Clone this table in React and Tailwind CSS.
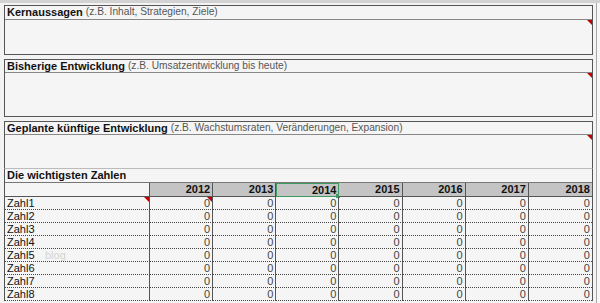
import React from "react";

const years = [2012, 2013, 2014, 2015, 2016, 2017, 2018];
const rows = ["Zahl1", "Zahl2", "Zahl3", "Zahl4", "Zahl5", "Zahl6", "Zahl7", "Zahl8"];

const Flag = () => (
  <span className="absolute right-0 top-0 w-0 h-0 border-l-[5px] border-l-transparent border-t-[5px] border-t-[#c00000]" />
);

const NoteBox = ({ title, hint, titleH, bodyH, last }) => (
  <div className={`shrink-0 border border-[#555] bg-[#f5f5f5] ${last ? "border-b-[#bbb]" : ""}`}>
    <div
      className={`${titleH} flex items-center px-[2px] border-b border-[#888] leading-none whitespace-nowrap`}
    >
      <span className="font-bold text-[11px] text-[#111]">{title}</span>
      <span className="text-[10.2px] text-[#555] ml-[3px]">{hint}</span>
    </div>
    <div className={`relative ${bodyH}`}>
      <Flag />
    </div>
  </div>
);

export default function App() {
  return (
    <div
      className="w-[600px] h-[303px] overflow-hidden bg-[#f3f3f3] flex flex-col"
      style={{ fontFamily: '"Liberation Sans", Arial, sans-serif' }}
    >
      <div className="h-[3px] bg-[#d2d2d2] shrink-0" />
      <div className="flex flex-1 min-h-0">
        <div className="w-[4px] shrink-0" />
        <div className="w-[589px] shrink-0 flex flex-col pt-[2px]">
          <NoteBox title="Kernaussagen" hint="(z.B. Inhalt, Strategien, Ziele)" titleH="h-[14px]" bodyH="h-[34px]" />
          <div className="h-[4px] shrink-0" />
          <NoteBox
            title="Bisherige Entwicklung"
            hint="(z.B. Umsatzentwicklung bis heute)"
            titleH="h-[13px]"
            bodyH="h-[43px]"
          />
          <div className="h-[4px] shrink-0" />
          <NoteBox
            title="Geplante künftige Entwicklung"
            hint="(z.B. Wachstumsraten, Veränderungen, Expansion)"
            titleH="h-[13px]"
            bodyH="h-[33px]"
            last
          />

          {/* Zahlen table */}
          <div className="shrink-0 border-l border-r border-[#555] bg-[#f5f5f5]">
            <div className="h-[14px] flex items-center px-[2px] border-b border-[#777] text-[11px] font-bold text-[#111] leading-none">
              Die wichtigsten Zahlen
            </div>
            <div className="grid grid-cols-[145px_repeat(7,1fr)] text-[11px] leading-none">
              <div className="h-[14px] border-b border-[#555] border-r border-r-[#555]" />
              {years.map((y, i) => (
                <div
                  key={y}
                  className={`relative h-[14px] bg-[#c4c4c4] flex items-center justify-end pr-[2px] font-bold text-[#111] ${
                    y === 2014
                      ? "border border-[#3f9a5f]"
                      : `border-b border-[#555] ${i < 6 ? "border-r border-r-[#555]" : ""}`
                  }`}
                >
                  {y}
                  {y === 2014 && (
                    <span className="absolute -right-[2px] -bottom-[2px] w-[4px] h-[4px] bg-[#3f9a5f]" />
                  )}
                </div>
              ))}
              {rows.map((r, ri) => (
                <React.Fragment key={r}>
                  <div className="relative h-[13px] flex items-center px-[2px] text-[#111] border-b border-b-[#444] [border-bottom-style:dotted] border-r border-r-[#555]">
                    {r}
                    {ri === 0 && <Flag />}
                    {r === "Zahl5" && (
                      <span className="absolute left-[40px] text-[#d4d4d4]">blog</span>
                    )}
                  </div>
                  {years.map((y, i) => (
                    <div
                      key={y}
                      className={`relative h-[13px] flex items-center justify-end pr-[2px] text-[#444] border-b border-b-[#444] [border-bottom-style:dotted] ${
                        i < 6 ? "border-r border-r-[#555]" : ""
                      }`}
                    >
                      0
                      {ri === 0 && i === 0 && <Flag />}
                    </div>
                  ))}
                </React.Fragment>
              ))}
            </div>
          </div>
        </div>
        <div className="w-[3px] shrink-0" />
        <div className="w-[1px] shrink-0 bg-[#a8a8a8]" />
        <div className="flex-1 bg-[#f7f7f7]" />
      </div>
    </div>
  );
}
